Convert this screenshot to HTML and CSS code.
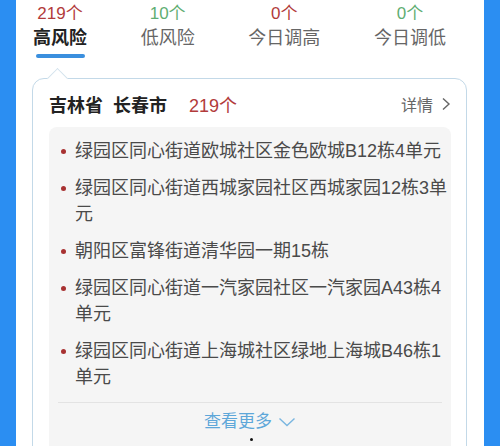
FILE: index.html
```html
<!DOCTYPE html>
<html lang="zh-CN">
<head>
<meta charset="utf-8">
<link rel="stylesheet" href="styles.css">
</head>
<body>
<div class="page">
  <div class="tabs">
    <div class="tab active">
      <div class="num red">219个</div>
      <div class="label">高风险</div>
      <div class="bar"></div>
    </div>
    <div class="tab">
      <div class="num green">10个</div>
      <div class="label">低风险</div>
    </div>
    <div class="tab">
      <div class="num red">0个</div>
      <div class="label">今日调高</div>
    </div>
    <div class="tab">
      <div class="num green">0个</div>
      <div class="label">今日调低</div>
    </div>
  </div>
  <div class="card">
    <div class="pointer"></div>
    <div class="card-head">
      <div class="city"><span class="prov">吉林省</span><span class="prov">长春市</span><span class="count">219个</span></div>
      <div class="detail">详情<svg class="chev-r" width="10" height="14" viewBox="0 0 10 14"><path d="M2 1.5 L8 7 L2 12.5" fill="none" stroke="#666" stroke-width="1.4"/></svg></div>
    </div>
    <div class="box">
      <ul class="list">
        <li>绿园区同心街道欧城社区金色欧城B12栋4单元</li>
        <li>绿园区同心街道西城家园社区西城家园12栋3单元</li>
        <li>朝阳区富锋街道清华园一期15栋</li>
        <li>绿园区同心街道一汽家园社区一汽家园A43栋4单元</li>
        <li>绿园区同心街道上海城社区绿地上海城B46栋1单元</li>
      </ul>
      <div class="more">查看更多<svg class="chev-d" width="18" height="12" viewBox="0 0 18 12"><path d="M1.5 2.5 L9 9.5 L16.5 2.5" fill="none" stroke="#7ab6e0" stroke-width="1.4"/></svg></div>
      <div class="dot"></div>
    </div>
  </div>
</div>
</body>
</html>
```
FILE: styles.css
```css
html, body {
  margin: 0;
  padding: 0;
}
body {
  width: 500px;
  height: 446px;
  overflow: hidden;
  background: #2b8ef2;
  font-family: "Liberation Sans", "Noto Sans CJK SC", sans-serif;
}
.page {
  margin: 0 16px;
  height: 446px;
  background: #ffffff;
  overflow: hidden;
}
.tabs {
  display: flex;
  justify-content: space-between;
  padding: 3px 38px 0 17px;
  height: 72px;
  box-sizing: border-box;
}
.tab {
  display: flex;
  flex-direction: column;
  align-items: center;
}
.num {
  font-size: 17px;
  line-height: 22px;
}
.red { color: #b23b3b; }
.green { color: #5fae72; }
.label {
  font-size: 18px;
  line-height: 26px;
  color: #666666;
}
.tab.active .label {
  color: #222222;
  font-weight: bold;
}
.bar {
  margin-top: 3px;
  width: 49px;
  height: 4px;
  border-radius: 2px;
  background: #3a8fde;
}
.card {
  position: relative;
  margin: 6px 17px 0 16px;
  border: 1px solid #c3d9e8;
  border-radius: 12px;
  background: #ffffff;
  padding: 0 15px 0 16px;
  height: 420px;
}
.pointer {
  position: absolute;
  left: 17px;
  top: -8px;
  width: 14px;
  height: 14px;
  background: #ffffff;
  border-top: 1px solid #d3e2ec;
  border-left: 1px solid #d3e2ec;
  transform: rotate(45deg);
}
.card-head {
  display: flex;
  justify-content: space-between;
  align-items: center;
  height: 48px;
  padding-top: 1px;
  box-sizing: border-box;
}
.city {
  font-size: 18px;
  color: #222222;
}
.prov {
  font-weight: bold;
  margin-right: 10px;
}
.count {
  color: #b23b3b;
  margin-left: 12px;
}
.detail {
  font-size: 16px;
  color: #666666;
  display: flex;
  align-items: center;
  gap: 8px;
}
.box {
  background: #f5f5f5;
  border-radius: 8px;
  padding: 11px 0 20px 0;
  position: relative;
}
.list {
  list-style: none;
  margin: 0;
  padding: 0 0 0 26px;
}
.list li {
  position: relative;
  font-size: 18px;
  line-height: 26px;
  color: #4a4a4a;
  margin-bottom: 11px;
}
.list li::before {
  content: "";
  position: absolute;
  left: -14px;
  top: 11px;
  width: 5px;
  height: 5px;
  border-radius: 50%;
  background: #a83232;
}
.list li:last-child {
  margin-bottom: 12px;
}
.more {
  margin: 0 9px;
  border-top: 1px solid #e3e3e3;
  padding-top: 7px;
  display: flex;
  justify-content: center;
  align-items: center;
  gap: 6px;
  font-size: 17px;
  line-height: 24px;
  color: #5ea7d9;
}
.dot {
  position: absolute;
  left: 201px;
  top: 311px;
  width: 3px;
  height: 3px;
  border-radius: 50%;
  background: #111111;
}
```
